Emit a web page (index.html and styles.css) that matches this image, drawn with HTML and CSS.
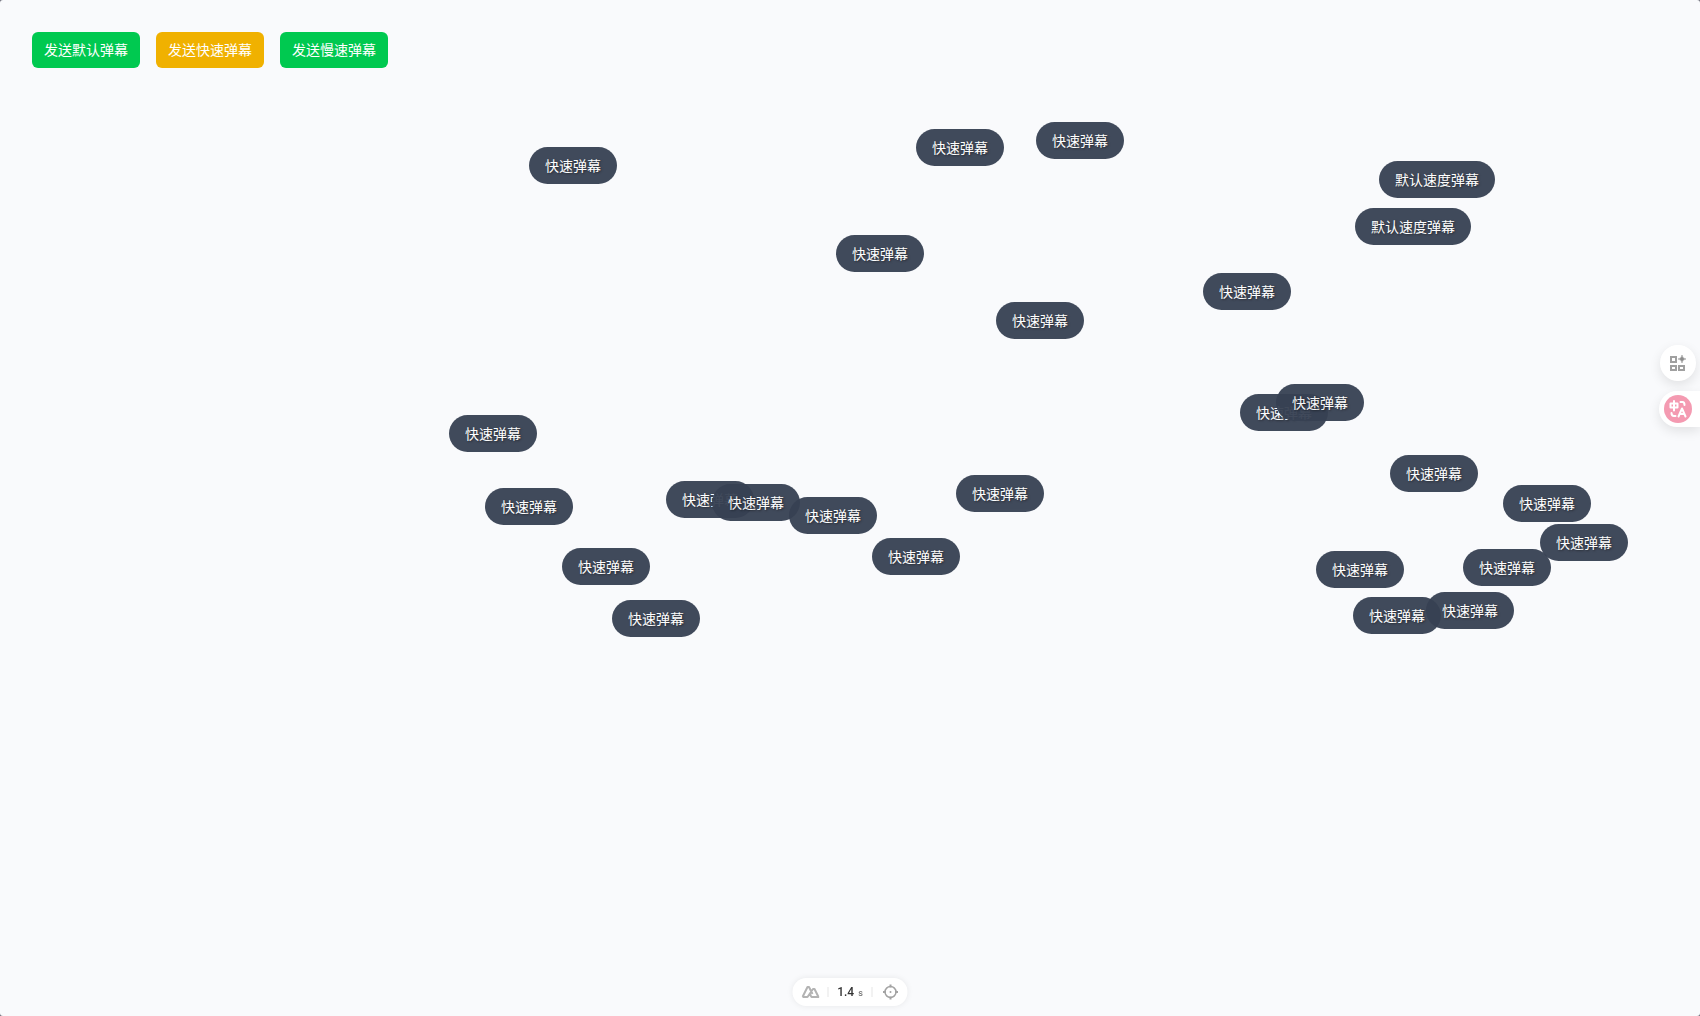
FILE: index.html
```html
<!DOCTYPE html>
<html lang="zh-CN">
<head>
<meta charset="utf-8">
<title>弹幕</title>
<link rel="stylesheet" href="styles.css">
</head>
<body>
<main class="page">
  <div class="actions">
    <button type="button" class="btn btn-green">发送默认弹幕</button>
    <button type="button" class="btn btn-yellow">发送快速弹幕</button>
    <button type="button" class="btn btn-green">发送慢速弹幕</button>
  </div>

  <div class="stage">
    <div class="danmaku" style="left:1379px;top:161px">默认速度弹幕</div>
    <div class="danmaku" style="left:1355px;top:208px">默认速度弹幕</div>
    <div class="danmaku" style="left:449px;top:415px">快速弹幕</div>
    <div class="danmaku" style="left:485px;top:488px">快速弹幕</div>
    <div class="danmaku" style="left:529px;top:147px">快速弹幕</div>
    <div class="danmaku" style="left:562px;top:548px">快速弹幕</div>
    <div class="danmaku" style="left:612px;top:600px">快速弹幕</div>
    <div class="danmaku" style="left:666px;top:481px">快速弹幕</div>
    <div class="danmaku" style="left:712px;top:484px">快速弹幕</div>
    <div class="danmaku" style="left:789px;top:497px">快速弹幕</div>
    <div class="danmaku" style="left:836px;top:235px">快速弹幕</div>
    <div class="danmaku" style="left:872px;top:538px">快速弹幕</div>
    <div class="danmaku" style="left:916px;top:129px">快速弹幕</div>
    <div class="danmaku" style="left:956px;top:475px">快速弹幕</div>
    <div class="danmaku" style="left:996px;top:302px">快速弹幕</div>
    <div class="danmaku" style="left:1036px;top:122px">快速弹幕</div>
    <div class="danmaku" style="left:1203px;top:273px">快速弹幕</div>
    <div class="danmaku" style="left:1240px;top:394px">快速弹幕</div>
    <div class="danmaku" style="left:1276px;top:384px">快速弹幕</div>
    <div class="danmaku" style="left:1316px;top:551px">快速弹幕</div>
    <div class="danmaku" style="left:1353px;top:597px">快速弹幕</div>
    <div class="danmaku" style="left:1390px;top:455px">快速弹幕</div>
    <div class="danmaku" style="left:1426px;top:592px">快速弹幕</div>
    <div class="danmaku" style="left:1463px;top:549px">快速弹幕</div>
    <div class="danmaku" style="left:1503px;top:485px">快速弹幕</div>
    <div class="danmaku" style="left:1540px;top:524px">快速弹幕</div>
  </div>
</main>

<aside class="side-tools">
  <button type="button" class="side-btn side-apps" aria-label="应用">
    <svg width="16" height="16" viewBox="0 0 16 16" fill="none" stroke="#a0a0a0" stroke-width="2">
      <rect x="1" y="2" width="5" height="5"/>
      <rect x="1" y="11" width="5" height="4"/>
      <rect x="9" y="11" width="5" height="4"/>
      <path d="M12 0Q12.300 3.700 16 4Q12.300 4.300 12 8Q11.700 4.300 8 4Q11.700 3.700 12 0Z" fill="#8c8c8c" stroke="#8c8c8c" stroke-width=".5"/>
    </svg>
  </button>
  <button type="button" class="side-btn side-translate" aria-label="翻译">
    <svg width="28" height="28" viewBox="0 0 28 28" fill="none" stroke="#fff" stroke-width="2" stroke-linecap="round" stroke-linejoin="round">
      <circle cx="14" cy="14" r="14" fill="#f49ab1" stroke="none"/>
      <path d="M6.500 8.500H13.500V12.500H6.500ZM10 6V15.500M16.500 7H18.500Q20.500 7 20.500 10M7.500 18Q7.500 21 10 21H11.500M14.500 21.500L18 13.500L21.500 21.500M16 19H20"/>
    </svg>
  </button>
</aside>

<div class="perf-bar">
  <button type="button" class="perf-btn" aria-label="性能">
    <svg width="18" height="12" viewBox="0 0 18 12" fill="none" stroke="#b3b3b3" stroke-width="2" stroke-linejoin="round">
      <path d="M1 11L6 1H7.500L11 8M1 11H6L11.500 3H13L17 11H10L8.500 8.500"/>
    </svg>
  </button>
  <div class="perf-time"><span>1.4</span><small>s</small></div>
  <button type="button" class="perf-btn" aria-label="定位">
    <svg width="16" height="16" viewBox="0 0 16 16" fill="none" stroke="#a3a3a3" stroke-width="1.500">
      <circle cx="8" cy="8" r="5.500"/>
      <path stroke-width="2" d="M8 .5V3.500M8 12.500V15.500M.5 8H3.500M12.500 8H15.500"/>
      <circle cx="8" cy="8" r="1" fill="#a3a3a3" stroke="none"/>
    </svg>
  </button>
</div>
</body>
</html>
```
FILE: styles.css
```css
* {
  box-sizing: border-box;
}

html {
  background: #70707c;
}

body {
  margin: 0;
  font-family: "Noto Sans CJK SC", sans-serif;
  font-size: 14px;
  line-height: 20px;
}

button {
  margin: 0;
  padding: 0;
  border: 0;
  background: none;
  font: inherit;
  cursor: pointer;
}

svg {
  display: block;
}

.page {
  position: relative;
  min-height: 100vh;
  padding: 32px;
  overflow: hidden;
  border-radius: 3px;
  background: #f9fafc;
}

.actions {
  display: flex;
  gap: 16px;
}

.btn {
  padding: 7px 12px 9px;
  border-radius: 6px;
  color: #fff;
}

.btn-green {
  background: #00c950;
}

.btn-yellow {
  background: #f0b100;
}

.stage {
  position: absolute;
  inset: 0;
  overflow: hidden;
  pointer-events: none;
}

.danmaku {
  position: absolute;
  padding: 8px 16px;
  border-radius: 20px;
  background: #374153;
  color: #fff;
  line-height: 21px;
  white-space: nowrap;
  text-shadow: 1px 1px 2px rgba(0, 0, 0, 0.5);
  opacity: 0.95;
}

.side-tools {
  position: fixed;
  top: 345px;
  right: 0;
  display: flex;
  flex-direction: column;
  align-items: flex-end;
  gap: 10px;
}

.side-btn {
  display: flex;
  align-items: center;
  height: 36px;
  background: #fff;
  box-shadow: 0 4px 12px rgba(0, 0, 0, 0.1);
}

.side-apps {
  justify-content: center;
  width: 36px;
  margin-right: 4px;
  border-radius: 50%;
}

.side-translate {
  width: 41px;
  padding-left: 5px;
  border-radius: 18px 0 0 18px;
}

.perf-bar {
  position: fixed;
  bottom: 10px;
  left: 50%;
  display: flex;
  align-items: center;
  height: 28px;
  border-radius: 14px;
  background: #fff;
  box-shadow: 0 0 6px rgba(0, 0, 0, 0.08);
  transform: translateX(-50%);
}

.perf-btn {
  display: flex;
  justify-content: center;
  width: 35px;
}

.perf-time {
  display: flex;
  align-items: baseline;
  justify-content: center;
  gap: 4px;
  width: 45px;
  height: 10px;
  border: solid #e5e5e5;
  border-width: 0 1px;
  color: #333;
  font: 500 12px/10px Roboto, "Liberation Sans", sans-serif;
}

.perf-time small {
  color: #777;
  font-size: 9px;
}
```
